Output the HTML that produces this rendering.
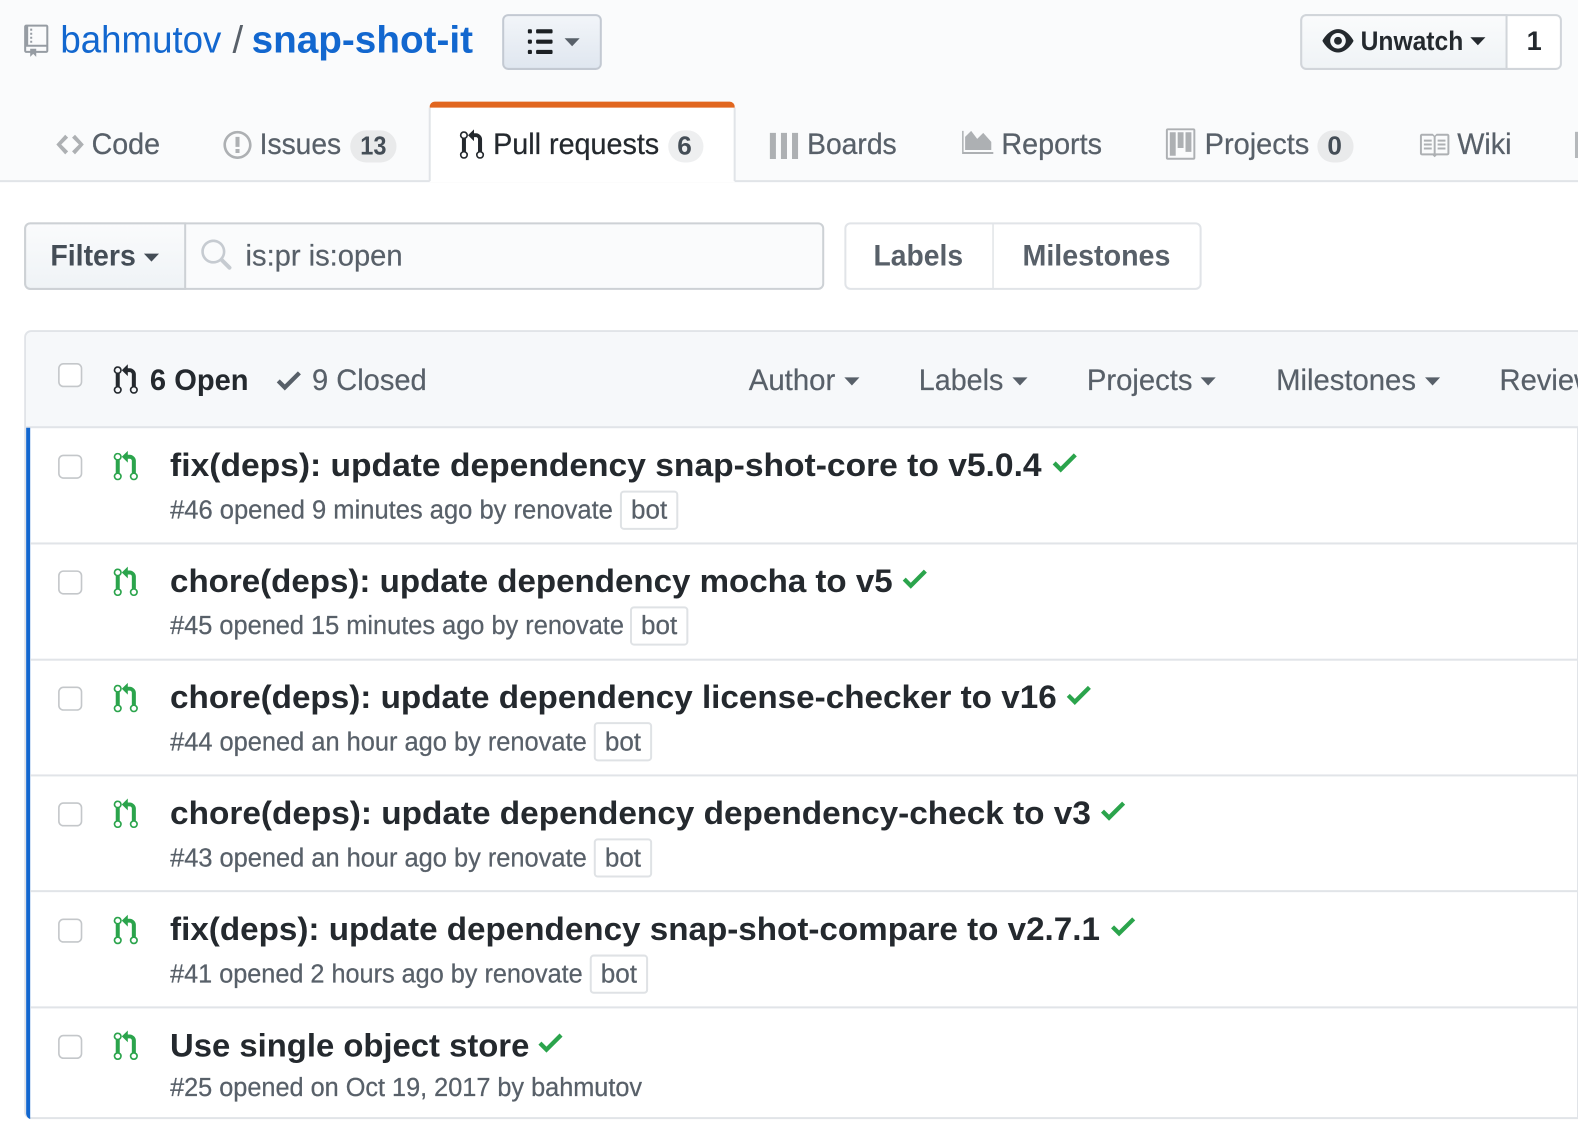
<!DOCTYPE html>
<html lang="en"><head><meta charset="utf-8"><title>Pull requests</title>
<style>
html,body{margin:0;padding:0;background:#fff;width:1578px;height:1136px;overflow:hidden}
svg{display:block;font-family:"Liberation Sans",Arial,sans-serif;filter:blur(.35px)}
.b{font-weight:700}
.tab{font-size:29px;fill:#586069;stroke:#586069;stroke-width:.25px}
.ttl{font-size:32.5px;font-weight:700;fill:#24292e}
.sub{font-size:25.5px;fill:#586069;stroke:#586069;stroke-width:.25px}
.hd{font-size:29px;fill:#586069;stroke:#586069;stroke-width:.2px}
.cnt{font-size:26px;font-weight:700;fill:#444d56}
.ic{fill:#adb0b3}
.car{fill:#586069}
.grn{fill:#2ba44c}
.lnk{fill:#1267cf}
</style></head><body>
<svg width="1578" height="1136" viewBox="0 0 1568 1128.8" preserveAspectRatio="none" xmlns="http://www.w3.org/2000/svg">
<defs>
<linearGradient id="g1" x1="0" y1="0" x2="0" y2="1"><stop offset="0" stop-color="#f2f5f9"/><stop offset="1" stop-color="#dfe6ef"/></linearGradient>
<linearGradient id="g2" x1="0" y1="0" x2="0" y2="1"><stop offset="0" stop-color="#fafbfc"/><stop offset="1" stop-color="#eff3f6"/></linearGradient>
<path id="pr" d="M11 11.28V5c-.03-.78-.34-1.47-.94-2.06C9.46 2.35 8.78 2.03 8 2H7V0L4 3l3 3V4h1c.27.02.48.11.69.31.21.2.3.42.31.69v6.28A1.993 1.993 0 0 0 10 15a1.993 1.993 0 0 0 1-3.72zm-1 2.92c-.66 0-1.2-.55-1.2-1.2 0-.65.55-1.2 1.2-1.2.65 0 1.2.55 1.2 1.2 0 .65-.55 1.2-1.2 1.2zM4 3c0-1.11-.89-2-2-2a1.993 1.993 0 0 0-1 3.72v6.56A1.993 1.993 0 0 0 2 15a1.993 1.993 0 0 0 1-3.72V4.72c.59-.34 1-.98 1-1.72zm-.8 10c0 .66-.55 1.2-1.2 1.2-.65 0-1.2-.55-1.2-1.2 0-.65.55-1.2 1.2-1.2.65 0 1.2.55 1.2 1.2zM2 4.2C1.34 4.2.8 3.65.8 3c0-.65.55-1.2 1.2-1.2.65 0 1.2.55 1.2 1.2 0 .65-.55 1.2-1.2 1.2z"/>
<path id="chk" d="M12 5l-8 8-4-4 1.5-1.5L4 10l6.5-6.5L12 5z"/>
<path id="car" d="M0 0h15l-7.5 8z"/>
</defs>

<!-- page header -->
<rect x="0" y="0" width="1568" height="180" fill="#fafbfc"/>
<rect x="0" y="179" width="1568" height="2" fill="#e1e4e8"/>

<path transform="translate(24,24.5) scale(2)" fill="#969ca3" d="M4 9H3V8h1v1zm0-3H3v1h1V6zm0-2H3v1h1V4zm0-2H3v1h1V2zm8-1v12c0 .55-.45 1-1 1H6v2l-1.5-1.5L3 16v-2H1c-.55 0-1-.45-1-1V1c0-.55.45-1 1-1h10c.55 0 1 .45 1 1zm-1 10H1v2h2v-1h3v1h5v-2zm0-10H2v9h9V1z"/>
<text x="60" y="52" font-size="38" class="lnk" textLength="160" lengthAdjust="spacingAndGlyphs">bahmutov</text>
<text x="231" y="52" font-size="38" fill="#586069">/</text>
<text x="250" y="52" font-size="38" class="b lnk" textLength="220" lengthAdjust="spacingAndGlyphs">snap-shot-it</text>

<rect x="500" y="15" width="97" height="53.500" rx="5" fill="url(#g1)" stroke="#c3c9d2" stroke-width="2"/>
<path transform="translate(524.500,25) scale(2.050)" fill="#1b1f23" d="M2 13c0 .59 0 1-.59 1H.59C0 14 0 13.590 0 13c0-.59 0-1 .59-1h.81c.59 0 .59.41.59 1H2zm2.590-9h6.810c.59 0 .59-.41.59-1 0-.59 0-1-.59-1H4.590C4 2 4 2.410 4 3c0 .59 0 1 .59 1zM1.410 7H.59C0 7 0 7.410 0 8c0 .59 0 1 .59 1h.81c.59 0 .59-.41.59-1 0-.59 0-1-.59-1h.01zm0-5H.59C0 2 0 2.410 0 3c0 .59 0 1 .59 1h.81c.59 0 .59-.41.59-1 0-.59 0-1-.59-1h.01zm10 5H4.590C4 7 4 7.410 4 8c0 .59 0 1 .59 1h6.810c.59 0 .59-.41.59-1 0-.59 0-1-.59-1h.01zm0 5H4.590C4 12 4 12.410 4 13c0 .59 0 1 .59 1h6.810c.59 0 .59-.41.59-1 0-.59 0-1-.59-1h.01z"/>
<use href="#car" x="561" y="38" class="car"/>

<rect x="1293" y="15" width="258" height="53.500" rx="5" fill="#fff" stroke="#d1d5da" stroke-width="2"/>
<path d="M1298 15h199v53.500h-199a5 5 0 0 1-5-5v-43.500a5 5 0 0 1 5-5z" fill="url(#g2)" stroke="#d1d5da" stroke-width="2"/>
<path transform="translate(1314,25) scale(1.940)" fill="#24292e" d="M8.060 2C3 2 0 8 0 8s3 6 8.060 6C13 14 16 8 16 8s-3-6-7.940-6zM8 12c-2.200 0-4-1.780-4-4 0-2.200 1.800-4 4-4 2.220 0 4 1.800 4 4 0 2.220-1.780 4-4 4zm2-4c0 1.110-.89 2-2 2-1.110 0-2-.89-2-2 0-1.110.89-2 2-2 1.110 0 2 .89 2 2z"/>
<text x="1352" y="49.500" font-size="27" class="b" fill="#24292e" textLength="102" lengthAdjust="spacingAndGlyphs">Unwatch</text>
<use href="#car" x="1461" y="37" fill="#24292e"/>
<text x="1517" y="49.500" font-size="27" class="b" fill="#24292e">1</text>

<!-- tabs -->
<path d="M427 181V107a6 6 0 0 1 6-6h291a6 6 0 0 1 6 6v74z" fill="#fff"/>
<path d="M427 180V107M730 107V180" stroke="#e1e4e8" stroke-width="2" fill="none"/>
<path d="M427 107v-1a5 5 0 0 1 5-5h293a5 5 0 0 1 5 5v1z" fill="#e1661f"/>

<path transform="translate(56,128) scale(1.950)" class="ic" d="M9.500 3L8 4.500 11.500 8 8 11.500 9.500 13 14 8 9.500 3zm-5 0L0 8l4.500 5L6 11.500 2.500 8 6 4.500 4.500 3z"/>
<text x="91" y="153" class="tab" textLength="68" lengthAdjust="spacingAndGlyphs">Code</text>
<path transform="translate(222,128) scale(2)" class="ic" d="M7 2.300c3.140 0 5.700 2.560 5.700 5.700s-2.560 5.700-5.700 5.700A5.710 5.710 0 0 1 1.300 8c0-3.140 2.560-5.700 5.700-5.700zM7 1C3.140 1 0 4.140 0 8s3.140 7 7 7 7-3.140 7-7-3.140-7-7-7zm1 3H6v5h2V4zm0 6H6v2h2v-2z"/>
<text x="258" y="153" class="tab" textLength="81" lengthAdjust="spacingAndGlyphs">Issues</text>
<rect x="348" y="129.500" width="46" height="32" rx="16" fill="#e9eaeb"/>
<text x="358" y="153.500" class="cnt" textLength="26" lengthAdjust="spacingAndGlyphs">13</text>

<use href="#pr" transform="translate(457,128.500) scale(2,1.950)" fill="#24292e"/>
<text x="490" y="153" class="tab" style="fill:#24292e;stroke:#24292e" textLength="165" lengthAdjust="spacingAndGlyphs">Pull requests</text>
<rect x="664" y="129.500" width="35" height="32" rx="16" fill="#eeeff0"/>
<text x="673" y="153.500" class="cnt">6</text>

<path class="ic" d="M765 132h6v26h-6zM776 132h6v26h-6zM787 132h6v26h-6z"/>
<text x="802" y="153" class="tab" textLength="89" lengthAdjust="spacingAndGlyphs">Boards</text>
<path class="ic" d="M956 130h1.500v21H987v2h-31z"/>
<path class="ic" d="M959 149V136l6-6 6 8 6-6 8 9v8z"/>
<text x="995" y="153" class="tab" textLength="100" lengthAdjust="spacingAndGlyphs">Reports</text>
<path transform="translate(1158.500,127.500) scale(1.950)" class="ic" fill-rule="evenodd" d="M10 12h3V2h-3v10zm-4-2h3V2H6v8zm-4 4h3V2H2v12zm-1 1h13V1H1v14zM14 0H1a1 1 0 0 0-1 1v14a1 1 0 0 0 1 1h13a1 1 0 0 0 1-1V1a1 1 0 0 0-1-1z"/>
<text x="1197" y="153" class="tab" textLength="104" lengthAdjust="spacingAndGlyphs">Projects</text>
<rect x="1309" y="129.500" width="36" height="32" rx="16" fill="#e9eaeb"/>
<text x="1319" y="153.500" class="cnt">0</text>
<path transform="translate(1409,129) scale(1.950)" class="ic" d="M3 5h4v1H3V5zm0 3h4V7H3v1zm0 2h4V9H3v1zm11-5h-4v1h4V5zm0 2h-4v1h4V7zm0 2h-4v1h4V9zm2-6v9c0 .55-.45 1-1 1H9.500l-1 1-1-1H2c-.55 0-1-.45-1-1V3c0-.55.45-1 1-1h5.500l1 1 1-1H15c.55 0 1 .45 1 1zm-8 .5L7.500 3H2v9h6V3.500zm7-.5H9.500l-.5.5V12h6V3z"/>
<text x="1448" y="153" class="tab" textLength="54" lengthAdjust="spacingAndGlyphs">Wiki</text>
<rect x="1565" y="131" width="3" height="26" fill="#b5b8bb"/>

<!-- filters -->
<rect x="25" y="222" width="793" height="65" rx="5" fill="#fafbfc" stroke="#cdd1d5" stroke-width="2"/>
<path d="M184 222H30a5 5 0 0 0-5 5v55a5 5 0 0 0 5 5h154z" fill="url(#g2)" stroke="#cdd1d5" stroke-width="2"/>
<text x="50" y="264" font-size="29" class="b" fill="#444d56" textLength="85" lengthAdjust="spacingAndGlyphs">Filters</text>
<use href="#car" x="143" y="252" fill="#444d56"/>
<path transform="translate(198,238) scale(2)" fill="#c6cbd1" d="M15.700 13.300l-3.810-3.830A5.930 5.930 0 0 0 13 6c0-3.310-2.690-6-6-6S1 2.690 1 6s2.690 6 6 6c1.300 0 2.480-.41 3.470-1.110l3.830 3.810c.19.2.45.3.7.3.25 0 .52-.09.7-.3a.996.996 0 0 0 0-1.410v.01zM7 10.700c-2.590 0-4.700-2.110-4.700-4.700 0-2.590 2.110-4.700 4.700-4.700 2.590 0 4.700 2.110 4.700 4.700 0 2.590-2.110 4.700-4.700 4.700z"/>
<text x="244" y="264" class="hd" textLength="156" lengthAdjust="spacingAndGlyphs">is:pr is:open</text>

<rect x="840" y="222" width="353" height="65" rx="5" fill="#fff" stroke="#e1e4e8" stroke-width="2"/>
<rect x="986" y="222" width="1.500" height="65" fill="#e1e4e8"/>
<text x="868" y="264" font-size="29" class="b" fill="#586069" textLength="89" lengthAdjust="spacingAndGlyphs">Labels</text>
<text x="1016" y="264" font-size="29" class="b" fill="#586069" textLength="147" lengthAdjust="spacingAndGlyphs">Milestones</text>

<!-- list box -->
<path d="M1568 329H31a6 6 0 0 0-6 6V1105a6 6 0 0 0 6 6h1537z" fill="#fff" stroke="#e1e4e8" stroke-width="2"/>
<path d="M1568 330H31a5 5 0 0 0-5 5V424h1542z" fill="#f6f8fa"/>
<rect x="26" y="423.500" width="1542" height="2" fill="#e1e4e8"/>
<path d="M30 425h-4v681a6 6 0 0 0 4 6z" fill="#1267cf"/>

<rect x="58.500" y="361.500" width="22.500" height="22.500" rx="4.500" fill="#fff" stroke="#c4c7ca" stroke-width="1.600"/>
<use href="#pr" transform="translate(113,362) scale(2,1.950)" fill="#24292e"/>
<text x="149" y="387.500" font-size="29" class="b" fill="#24292e" textLength="98" lengthAdjust="spacingAndGlyphs">6 Open</text>
<use href="#chk" transform="translate(275,362) scale(2)" fill="#586069"/>
<text x="310" y="387.500" class="hd" textLength="114" lengthAdjust="spacingAndGlyphs">9 Closed</text>
<text x="744" y="387.500" class="hd" textLength="86" lengthAdjust="spacingAndGlyphs">Author</text>
<use href="#car" x="839" y="375" class="car"/>
<text x="913" y="387.500" class="hd" textLength="84" lengthAdjust="spacingAndGlyphs">Labels</text>
<use href="#car" x="1006" y="375" class="car"/>
<text x="1080" y="387.500" class="hd" textLength="105" lengthAdjust="spacingAndGlyphs">Projects</text>
<use href="#car" x="1193" y="375" class="car"/>
<text x="1268" y="387.500" class="hd" textLength="139" lengthAdjust="spacingAndGlyphs">Milestones</text>
<use href="#car" x="1416" y="375" class="car"/>
<text x="1490" y="387.500" class="hd">Reviews</text>

<!-- row 1 -->
<rect x="58.500" y="452.500" width="22.500" height="22.500" rx="4.500" fill="#fff" stroke="#c4c7ca" stroke-width="1.600"/>
<use href="#pr" transform="translate(113,448) scale(2,1.950)" class="grn"/>
<text x="169" y="473" class="ttl" textLength="866" lengthAdjust="spacingAndGlyphs">fix(deps): update dependency snap-shot-core to v5.0.4</text>
<use href="#chk" transform="translate(1046,443.500) scale(2)" class="grn"/>
<text x="169" y="515.200" class="sub" textLength="440" lengthAdjust="spacingAndGlyphs">#46 opened 9 minutes ago by renovate</text>
<rect x="617" y="488.500" width="56" height="37" rx="3" fill="#fff" stroke="#dfe2e5" stroke-width="2"/>
<text x="627" y="515.200" class="sub" textLength="36" lengthAdjust="spacingAndGlyphs">bot</text>
<rect x="30" y="539" width="1538" height="2" fill="#e1e4e8"/>

<!-- row 2 -->
<rect x="58.500" y="567.500" width="22.500" height="22.500" rx="4.500" fill="#fff" stroke="#c4c7ca" stroke-width="1.600"/>
<use href="#pr" transform="translate(113,563) scale(2,1.950)" class="grn"/>
<text x="169" y="588" class="ttl" textLength="718" lengthAdjust="spacingAndGlyphs">chore(deps): update dependency mocha to v5</text>
<use href="#chk" transform="translate(897,559) scale(2)" class="grn"/>
<text x="169" y="630.200" class="sub" textLength="451" lengthAdjust="spacingAndGlyphs">#45 opened 15 minutes ago by renovate</text>
<rect x="627" y="603.500" width="56" height="37" rx="3" fill="#fff" stroke="#dfe2e5" stroke-width="2"/>
<text x="637" y="630.200" class="sub" textLength="36" lengthAdjust="spacingAndGlyphs">bot</text>
<rect x="30" y="654.500" width="1538" height="2" fill="#e1e4e8"/>

<!-- row 3 -->
<rect x="58.500" y="683" width="22.500" height="22.500" rx="4.500" fill="#fff" stroke="#c4c7ca" stroke-width="1.600"/>
<use href="#pr" transform="translate(113,678.500) scale(2,1.950)" class="grn"/>
<text x="169" y="703.500" class="ttl" textLength="881" lengthAdjust="spacingAndGlyphs">chore(deps): update dependency license-checker to v16</text>
<use href="#chk" transform="translate(1060,674.500) scale(2)" class="grn"/>
<text x="169" y="745.700" class="sub" textLength="414" lengthAdjust="spacingAndGlyphs">#44 opened an hour ago by renovate</text>
<rect x="591" y="718.500" width="56" height="37" rx="3" fill="#fff" stroke="#dfe2e5" stroke-width="2"/>
<text x="601" y="745.700" class="sub" textLength="36" lengthAdjust="spacingAndGlyphs">bot</text>
<rect x="30" y="769.500" width="1538" height="2" fill="#e1e4e8"/>

<!-- row 4 -->
<rect x="58.500" y="798" width="22.500" height="22.500" rx="4.500" fill="#fff" stroke="#c4c7ca" stroke-width="1.600"/>
<use href="#pr" transform="translate(113,793.500) scale(2,1.950)" class="grn"/>
<text x="169" y="819" class="ttl" textLength="915" lengthAdjust="spacingAndGlyphs">chore(deps): update dependency dependency-check to v3</text>
<use href="#chk" transform="translate(1094,789.500) scale(2)" class="grn"/>
<text x="169" y="861.200" class="sub" textLength="414" lengthAdjust="spacingAndGlyphs">#43 opened an hour ago by renovate</text>
<rect x="591" y="834" width="56" height="37" rx="3" fill="#fff" stroke="#dfe2e5" stroke-width="2"/>
<text x="601" y="861.200" class="sub" textLength="36" lengthAdjust="spacingAndGlyphs">bot</text>
<rect x="30" y="884.500" width="1538" height="2" fill="#e1e4e8"/>

<!-- row 5 -->
<rect x="58.500" y="913.500" width="22.500" height="22.500" rx="4.500" fill="#fff" stroke="#c4c7ca" stroke-width="1.600"/>
<use href="#pr" transform="translate(113,909) scale(2,1.950)" class="grn"/>
<text x="169" y="934" class="ttl" textLength="924" lengthAdjust="spacingAndGlyphs">fix(deps): update dependency snap-shot-compare to v2.7.1</text>
<use href="#chk" transform="translate(1104,904.500) scale(2)" class="grn"/>
<text x="169" y="976.200" class="sub" textLength="410" lengthAdjust="spacingAndGlyphs">#41 opened 2 hours ago by renovate</text>
<rect x="587" y="949.500" width="56" height="37" rx="3" fill="#fff" stroke="#dfe2e5" stroke-width="2"/>
<text x="597" y="976.200" class="sub" textLength="36" lengthAdjust="spacingAndGlyphs">bot</text>
<rect x="30" y="1000" width="1538" height="2" fill="#e1e4e8"/>

<!-- row 6 -->
<rect x="58.500" y="1029" width="22.500" height="22.500" rx="4.500" fill="#fff" stroke="#c4c7ca" stroke-width="1.600"/>
<use href="#pr" transform="translate(113,1024) scale(2,1.950)" class="grn"/>
<text x="169" y="1050" class="ttl" textLength="357" lengthAdjust="spacingAndGlyphs">Use single object store</text>
<use href="#chk" transform="translate(535,1020) scale(2)" class="grn"/>
<text x="169" y="1089.200" class="sub" textLength="469" lengthAdjust="spacingAndGlyphs">#25 opened on Oct 19, 2017 by bahmutov</text>
</svg>
</body></html>
